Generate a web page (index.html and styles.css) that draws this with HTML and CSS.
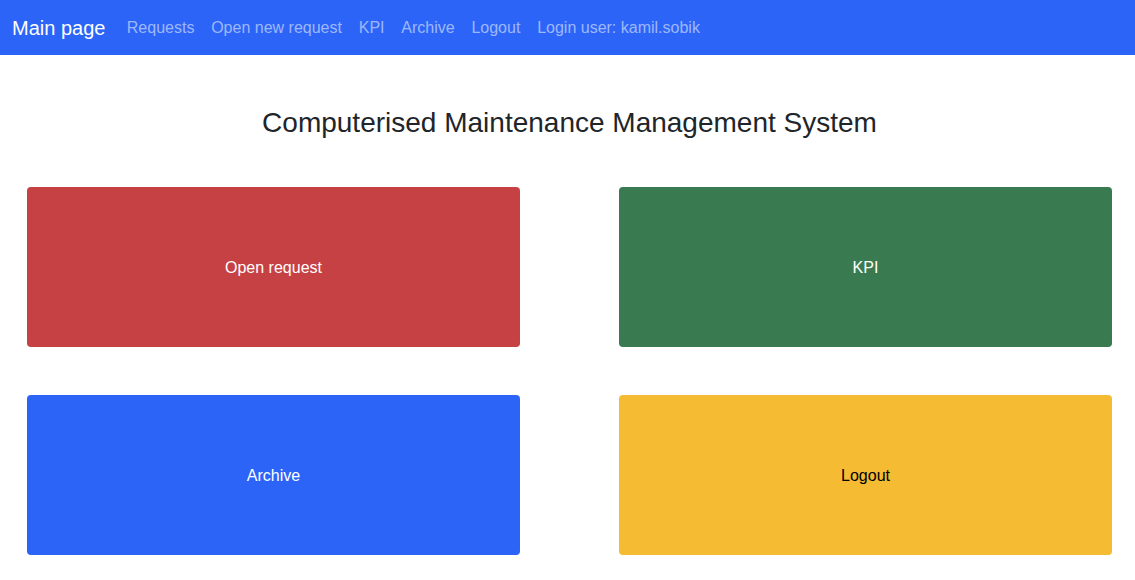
FILE: index.html
```html
<!DOCTYPE html>
<html lang="en">
<head>
<meta charset="utf-8">
<title>Main page</title>
<link rel="stylesheet" href="styles.css">
</head>
<body>
<nav class="navbar">
  <a class="brand" href="#">Main page</a>
  <ul class="nav">
    <li><a class="nav-link" href="#">Requests</a></li>
    <li><a class="nav-link" href="#">Open new request</a></li>
    <li><a class="nav-link" href="#">KPI</a></li>
    <li><a class="nav-link" href="#">Archive</a></li>
    <li><a class="nav-link" href="#">Logout</a></li>
    <li><span class="nav-link">Login user: kamil.sobik</span></li>
  </ul>
</nav>
<main class="content">
  <h3 class="title">Computerised Maintenance Management System</h3>
  <div class="tiles">
    <a class="tile tile-red" href="#">Open request</a>
    <a class="tile tile-green" href="#">KPI</a>
    <a class="tile tile-blue" href="#">Archive</a>
    <a class="tile tile-yellow" href="#">Logout</a>
  </div>
</main>
</body>
</html>
```

FILE: styles.css
```css
* { box-sizing: border-box; }
html, body { margin: 0; padding: 0; }
body {
  font-family: "Liberation Sans", Arial, Helvetica, sans-serif;
  font-size: 16px;
  color: #212529;
  background: #fff;
}
a { text-decoration: none; }

.navbar {
  display: flex;
  align-items: center;
  height: 55px;
  padding: 0 12px;
  background: #2b64f7;
}
.brand {
  color: #fff;
  font-size: 20px;
  line-height: 30px;
  margin-right: 13px;
}
.nav {
  display: flex;
  list-style: none;
  margin: 0;
  padding: 0;
}
.nav-link {
  display: block;
  padding: 8px 8.4px;
  color: rgba(255, 255, 255, 0.55);
  line-height: 24px;
}

.content { padding: 0 23px 0 27px; }
.title {
  margin: 51px 0 48px;
  text-align: center;
  font-size: 28px;
  font-weight: 500;
  line-height: 33px;
  color: #212529;
}
.tiles {
  display: grid;
  grid-template-columns: 493px 493px;
  column-gap: 99px;
  row-gap: 48px;
}
.tile {
  display: flex;
  align-items: center;
  justify-content: center;
  height: 160px;
  padding-top: 1px;
  border-radius: 4px;
  color: #fff;
  font-size: 16px;
}
.tile-red { background: #c64143; }
.tile-green { background: #3a7a50; }
.tile-blue { background: #2b64f7; }
.tile-yellow { background: #f4bb33; color: #000; }
```
